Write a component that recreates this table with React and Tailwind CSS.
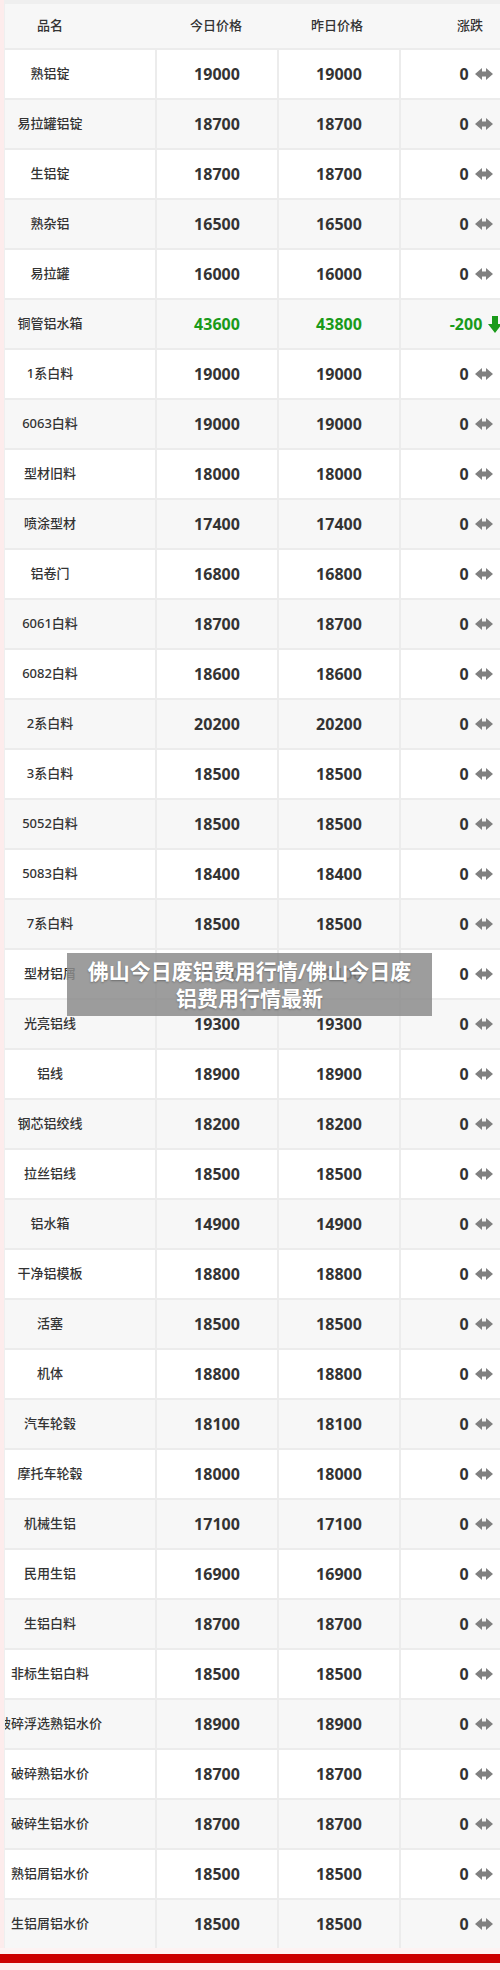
import React from "react";

const rows = [
  ["熟铝锭", 19000, 19000, 0],
  ["易拉罐铝锭", 18700, 18700, 0],
  ["生铝锭", 18700, 18700, 0],
  ["熟杂铝", 16500, 16500, 0],
  ["易拉罐", 16000, 16000, 0],
  ["铜管铝水箱", 43600, 43800, -200],
  ["1系白料", 19000, 19000, 0],
  ["6063白料", 19000, 19000, 0],
  ["型材旧料", 18000, 18000, 0],
  ["喷涂型材", 17400, 17400, 0],
  ["铝卷门", 16800, 16800, 0],
  ["6061白料", 18700, 18700, 0],
  ["6082白料", 18600, 18600, 0],
  ["2系白料", 20200, 20200, 0],
  ["3系白料", 18500, 18500, 0],
  ["5052白料", 18500, 18500, 0],
  ["5083白料", 18400, 18400, 0],
  ["7系白料", 18500, 18500, 0],
  ["型材铝屑", 19100, 19100, 0],
  ["光亮铝线", 19300, 19300, 0],
  ["铝线", 18900, 18900, 0],
  ["钢芯铝绞线", 18200, 18200, 0],
  ["拉丝铝线", 18500, 18500, 0],
  ["铝水箱", 14900, 14900, 0],
  ["干净铝模板", 18800, 18800, 0],
  ["活塞", 18500, 18500, 0],
  ["机体", 18800, 18800, 0],
  ["汽车轮毂", 18100, 18100, 0],
  ["摩托车轮毂", 18000, 18000, 0],
  ["机械生铝", 17100, 17100, 0],
  ["民用生铝", 16900, 16900, 0],
  ["生铝白料", 18700, 18700, 0],
  ["非标生铝白料", 18500, 18500, 0],
  ["破碎浮选熟铝水价", 18900, 18900, 0],
  ["破碎熟铝水价", 18700, 18700, 0],
  ["破碎生铝水价", 18700, 18700, 0],
  ["熟铝屑铝水价", 18500, 18500, 0],
  ["生铝屑铝水价", 18500, 18500, 0],
];

const font = { fontFamily: '"Noto Sans", "Noto Sans CJK SC", sans-serif' };

function SameArrow() {
  return (
    <svg width="18" height="12" viewBox="0 0 18 12" className="text-[#808080]">
      <polygon
        points="0,6 7,0 7,3.5 11,3.5 11,0 18,6 11,12 11,8.5 7,8.5 7,12"
        fill="currentColor"
      />
    </svg>
  );
}

function DownArrow() {
  return (
    <svg width="14" height="17" viewBox="0 0 14 17" className="text-[#1a9a1a]">
      <polygon points="4,0 10,0 10,8 14,8 7,17 0,8 4,8" fill="currentColor" />
    </svg>
  );
}

function Row({ row, idx }) {
  const [name, today, yday, diff] = row;
  const bg = idx % 2 === 0 ? "bg-white" : "bg-[#f7f7f7]";
  const numColor = diff < 0 ? "text-[#1a9a1a]" : "text-[#333]";
  return (
    <div className="flex gap-[2px] h-[48px]">
      <div className={`w-[150px] shrink-0 ${bg} flex items-center`}>
        <div className="w-[90px] flex justify-center whitespace-nowrap text-[13px] font-medium text-[#333]">
          {name}
        </div>
      </div>
      <div className={`w-[120px] shrink-0 ${bg} flex items-center justify-center text-[16px] font-bold ${numColor}`}>
        {today}
      </div>
      <div className={`w-[120px] shrink-0 ${bg} flex items-center justify-center text-[16px] font-bold ${numColor}`}>
        {yday}
      </div>
      <div className={`w-[150px] shrink-0 ${bg} flex items-center justify-center gap-[6px] text-[16px] font-bold ${numColor}`}>
        <span>{diff}</span>
        {diff < 0 ? <DownArrow /> : <SameArrow />}
      </div>
    </div>
  );
}

export default function App() {
  return (
    <div className="relative w-[500px] h-[1970px] overflow-hidden bg-[#fdecec]" style={font}>
      <div className="ml-[4px] bg-[#efefef] pt-[4px]">
        <div className="ml-[1px] overflow-hidden">
          <div className="flex flex-col gap-[2px] bg-[#ececec] w-[560px]">
            <div className="flex h-[44px] bg-[#f7f7f7] text-[13px] font-medium text-[#333]">
              <div className="w-[152px] shrink-0 flex items-center">
                <div className="w-[90px] flex justify-center">品名</div>
              </div>
              <div className="w-[122px] shrink-0 flex items-center justify-center pr-[4px]">今日价格</div>
              <div className="w-[122px] shrink-0 flex items-center justify-center pr-[6px]">昨日价格</div>
              <div className="w-[150px] shrink-0 flex items-center justify-center pr-[12px]">涨跌</div>
            </div>
            {rows.map((r, i) => (
              <Row key={i} row={r} idx={i} />
            ))}
          </div>
        </div>
      </div>
      <div className="h-[6px] bg-[#fdf3f3]" />
      <div className="h-[9px] bg-[#cc0000]" />

      <div className="absolute left-[67px] top-[953px] w-[365px] h-[63px] bg-[#8c8c8c]/85 flex flex-col items-center justify-center text-white font-bold text-[21px] leading-[27px] [text-shadow:0_1px_2px_rgba(0,0,0,0.3)]">
        <span className="whitespace-nowrap">佛山今日废铝费用行情/佛山今日废</span>
        <span className="whitespace-nowrap">铝费用行情最新</span>
      </div>
    </div>
  );
}
